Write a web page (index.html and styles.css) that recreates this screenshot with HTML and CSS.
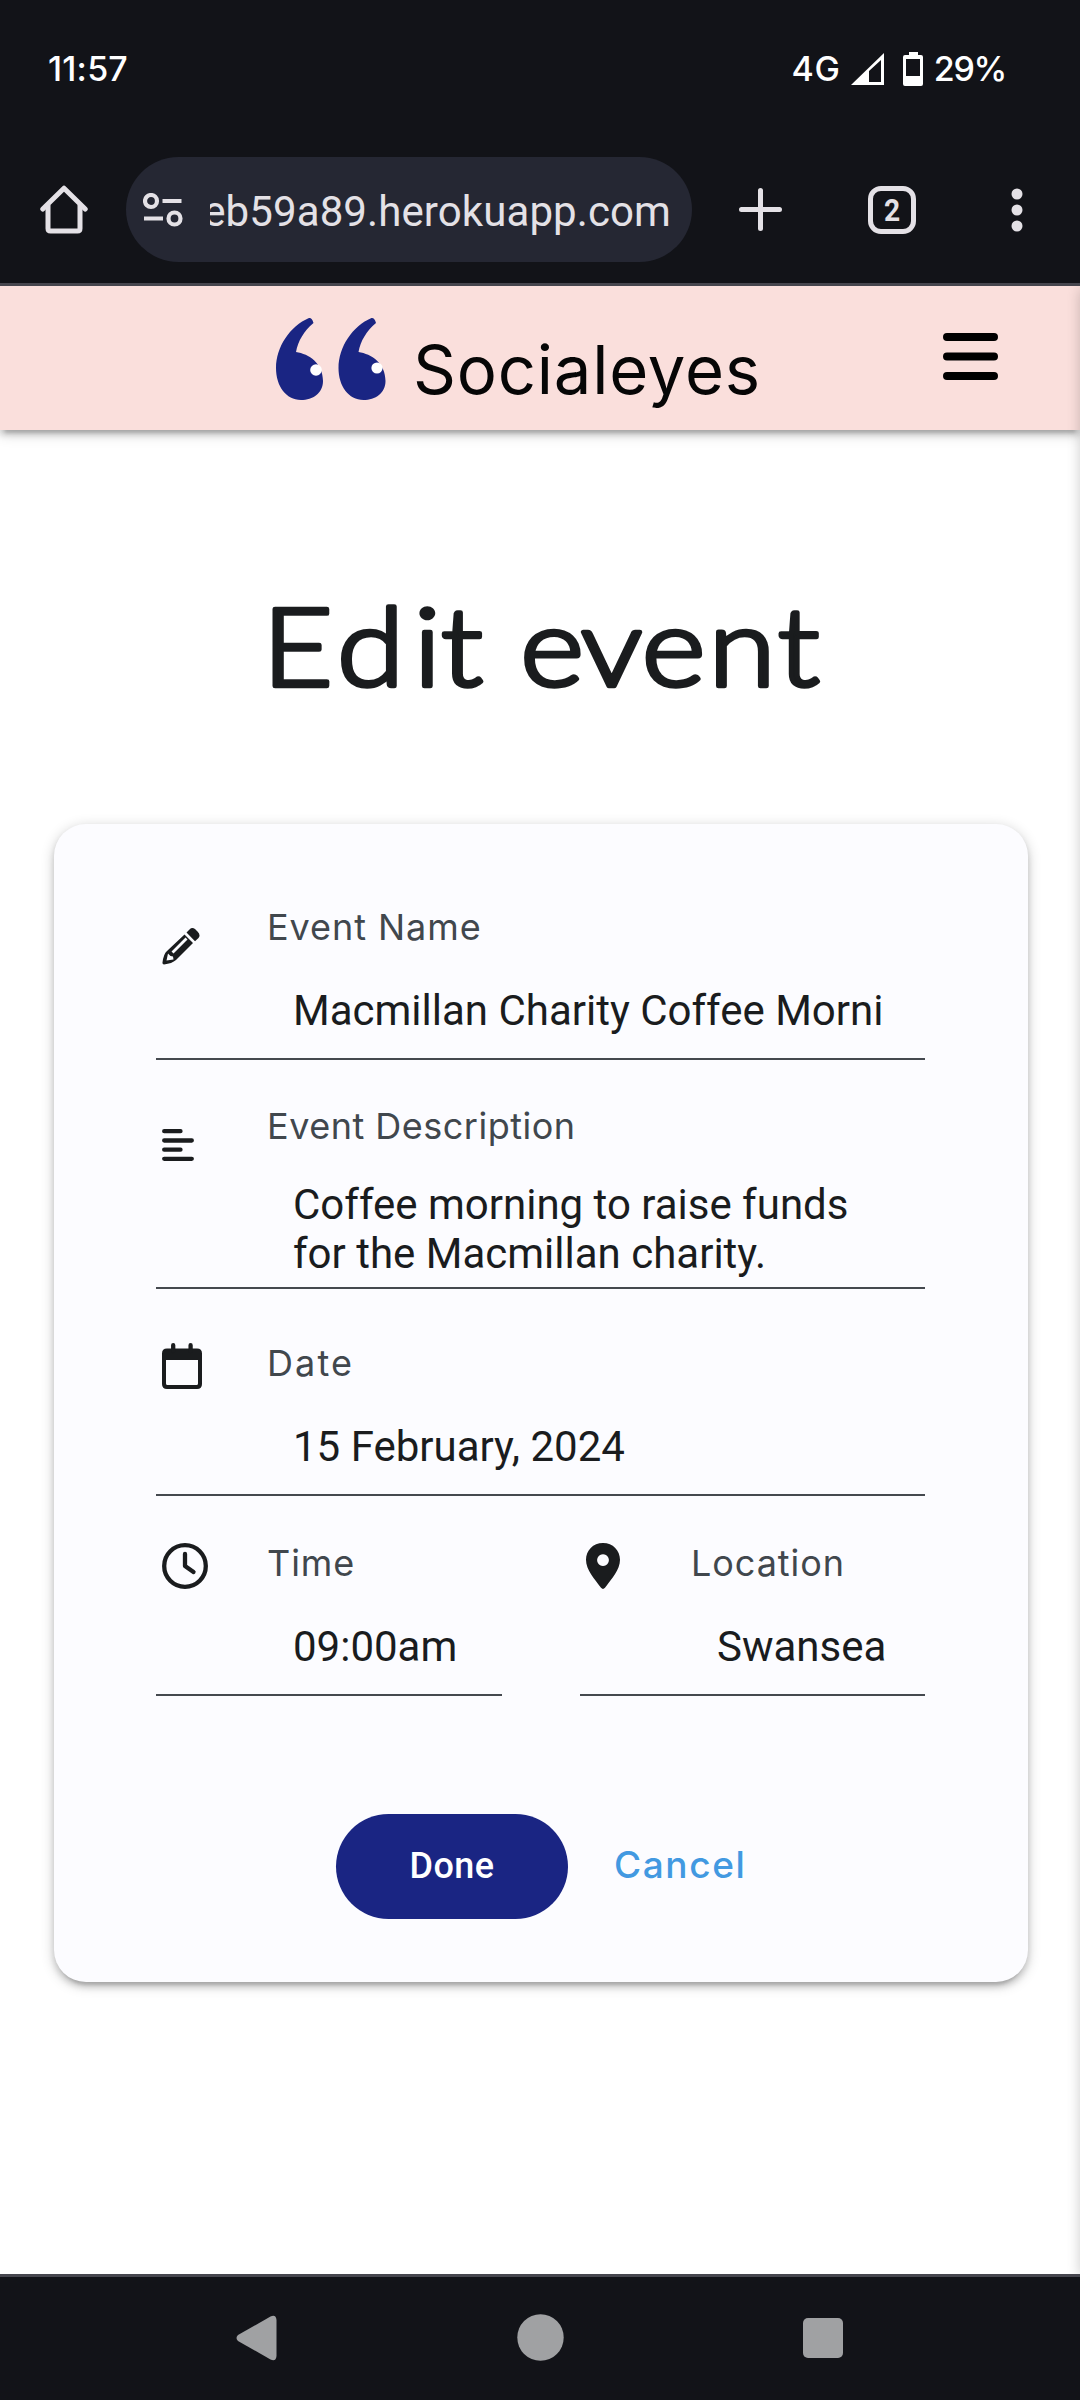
FILE: index.html
```html
<!DOCTYPE html>
<html lang="en">
<head>
<meta charset="utf-8">
<title>Socialeyes</title>
<link rel="stylesheet" href="styles.css">
</head>
<body>
<div class="status">
  <span class="status-time">11:57</span>
  <span class="status-net">4G</span>
  <svg class="status-signal" viewBox="0 0 33 32" width="33" height="32"><path fill="#fff" fill-rule="evenodd" d="M0 32 33 0V32ZM18 18V29H30V7Z"/></svg>
  <svg class="status-battery" viewBox="0 0 20 34" width="20" height="34"><path fill="#fff" fill-rule="evenodd" d="M6 0h9v3h3q2 0 2 2v27q0 2-2 2H2q-2 0-2-2V5q0-2 2-2h4ZM3 7v17h14V7Z"/></svg>
  <span class="status-level">29%</span>
</div>
<div class="toolbar">
  <svg class="home" viewBox="0 0 48 49" width="48" height="49" fill="none" stroke="#e4e1e6" stroke-width="5" stroke-linejoin="round"><path stroke-linecap="round" d="M2.8 24 24 3.2 45.2 24"/><path d="M8 20V43.5q0 2.5 2.5 2.5h27q2.5 0 2.5-2.5V20"/></svg>
  <div class="address">
    <svg class="tune" viewBox="0 0 40 34" width="40" height="34" fill="none" stroke="#e4e1e6" stroke-width="4.2"><circle cx="8" cy="8" r="6"/><circle cx="31.5" cy="25.500" r="6"/><path d="M19.500 8H38.500M1 25.500H20"/></svg>
    <div class="url">eb59a89.herokuapp.com</div>
  </div>
  <svg class="plus" viewBox="0 0 43 43" width="43" height="43" stroke="#e4e1e6" stroke-width="5" stroke-linecap="round"><path d="M21.500 2.500V40.500M2.500 21.500H40.500"/></svg>
  <div class="tabs"><span class="tab-count">2</span></div>
  <svg class="dots" viewBox="0 0 12 44" width="12" height="44" fill="#e4e1e6"><circle cx="6" cy="6" r="5.500"/><circle cx="6" cy="22" r="5.500"/><circle cx="6" cy="38" r="5.500"/></svg>
</div>
<div class="page">
  <header class="header">
    <svg class="logo" viewBox="0 0 112 84" width="112" height="84">
      <g fill="#1a2583">
        <path d="M33 1Q36 .500 37.500 6C28 14 22 24 20 35C33 37 47 46 47 64C47 76 37 83 25 83C10 83 0 69 0 51C0 30 14 9 33 1Z"/>
        <path d="M95.500 1Q98.500 .500 100 6C90.500 14 84.500 24 82.500 35C95.500 37 109.500 46 109.500 64C109.500 76 99.500 83 87.500 83C72.500 83 62.500 69 62.500 51C62.500 30 76.500 9 95.500 1Z"/>
      </g>
      <circle cx="40" cy="53" r="5.800" fill="#fff"/><circle cx="101" cy="51" r="5.600" fill="#fff"/>
    </svg>
    <span class="brand">Socialeyes</span>
    <svg class="menu" viewBox="0 0 55 47" width="55" height="47" stroke="#000" stroke-width="8" stroke-linecap="round"><path d="M4 4H51M4 23.500H51M4 43H51"/></svg>
  </header>
  <main class="main">
    <h1 class="title">
      <svg class="title-art" viewBox="0 0 1080 160" width="1080" height="160"><text transform="scale(1.12 1)" y="116.500" x="265.700 331 381.500 412.500 446 493 546 601.500 662.500 713">Edit event</text></svg>
    </h1>
    <form class="card">
      <div class="field">
        <svg class="icon pencil" viewBox="0 0 38 38" width="38" height="38"><path fill="#1a1c1e" fill-rule="evenodd" d="M22.500 7.500 31 16 14 33Q10 36.500 2 37.500Q.2 37.500 .5 35.500Q1.500 27 5 24ZM23.500 10.500 9.500 24.500l2 2L25.500 12.500ZM6 26.500 4.500 33.500 11.500 32.500 11 29.500 8.500 29ZM24.500 5.500 27.500 2.500Q30 0 33 2L35.500 4.500Q39 8 36.500 11L33 14.300Z"/></svg>
        <label class="label">Event Name</label>
        <div class="value">Macmillan Charity Coffee Morni</div>
      </div>
      <div class="field field-text">
        <svg class="icon align" viewBox="0 0 32 32" width="32" height="32" stroke="#1a1c1e" stroke-width="4.300" stroke-linecap="round"><path d="M2.200 2.200H18.500M2.200 11.500H29.800M2.200 20.700H18.500M2.200 29.800H29.800"/></svg>
        <label class="label label-desc">Event Description</label>
        <div class="value">Coffee morning to raise funds<br>for the Macmillan charity.</div>
      </div>
      <div class="field field-date">
        <svg class="icon calendar" viewBox="0 0 40 46" width="40" height="46"><path fill="#1a1c1e" fill-rule="evenodd" d="M5 5.500H35Q40 5.500 40 10.500V41Q40 46 35 46H5Q0 46 0 41V10.500Q0 5.500 5 5.500ZM4 17V40.500Q4 42 5.500 42H34.500Q36 42 36 40.500V17Z"/><path stroke="#1a1c1e" stroke-width="4.300" stroke-linecap="round" d="M11.200 2.200V8M28.600 2.200V8"/></svg>
        <label class="label label-date">Date</label>
        <div class="value">15 February, 2024</div>
      </div>
      <div class="pair">
        <div class="field">
          <svg class="icon clock" viewBox="0 0 46 46" width="46" height="46" fill="none" stroke="#1a1c1e" stroke-width="4.300" stroke-linecap="round" stroke-linejoin="round"><circle cx="23" cy="23" r="20.800"/><path d="M23 11V23L31.500 29"/></svg>
          <label class="label">Time</label>
          <div class="value">09:00am</div>
        </div>
        <div class="field">
          <svg class="icon pin" viewBox="0 0 34 46" width="34" height="46"><path fill="#1a1c1e" fill-rule="evenodd" d="M17 0C27 0 34 7.500 34 16.800C34 27 25.500 36 19 44.800Q17 47 15 44.800C8.500 36 0 27 0 16.800C0 7.500 7 0 17 0ZM17 11.200a5.900 5.900 0 1 0 .01 0Z"/></svg>
          <label class="label">Location</label>
          <div class="value">Swansea</div>
        </div>
      </div>
      <div class="actions">
        <button class="done" type="button">Done</button>
        <a class="cancel">Cancel</a>
      </div>
    </form>
  </main>
</div>
<nav class="nav">
  <svg viewBox="0 0 42 46" width="42" height="46" fill="#a0a1a3"><path d="M2 20 34.500 1.500Q40 -1 40.500 5V41Q40 47 34.500 44.500L2 26Q-1 23 2 20Z"/></svg>
  <svg viewBox="0 0 47 47" width="47" height="47" fill="#a0a1a3"><circle cx="23.500" cy="23.500" r="23.200"/></svg>
  <svg viewBox="0 0 40 40" width="40" height="40" fill="#a0a1a3"><rect width="40" height="40" rx="5"/></svg>
</nav>
</body>
</html>
```

FILE: styles.css
```css
* { box-sizing: border-box; }
body {
  margin: 0;
  width: 1080px;
  height: 2400px;
  display: flex;
  flex-direction: column;
  overflow: hidden;
  background: #fff;
  font-family: Roboto, sans-serif;
}
svg { display: block; flex: none; }

.status {
  height: 137px;
  padding: 0 74px 0 48px;
  display: flex;
  align-items: center;
  background: #121318;
  color: #fff;
  font: 500 34px Inter, sans-serif;
}
.status-time { letter-spacing: .2px; margin-right: auto; }
.status-net { letter-spacing: .8px; margin-right: 10px; }
.status-signal { margin-right: 19px; }
.status-battery { margin-right: 11px; }
.status-level { letter-spacing: -1.3px; }

.toolbar {
  height: 149px;
  padding: 20px 57px 21px 40px;
  display: flex;
  align-items: center;
  background: #121318;
  border-bottom: 3px solid #46464e;
}
.address {
  width: 566px;
  height: 105px;
  margin-left: 38px;
  padding: 0 21px 0 17px;
  display: flex;
  align-items: center;
  border-radius: 53px;
  background: #252733;
}
.url {
  width: 461px;
  margin-left: auto;
  padding-top: 4px;
  display: flex;
  justify-content: flex-end;
  overflow: hidden;
  white-space: nowrap;
  color: #e4e1e6;
  font-size: 42px;
  letter-spacing: .1px;
}
.plus { margin-left: 47px; }
.tabs {
  width: 48px;
  height: 48px;
  margin-left: 86px;
  border: 5px solid #e4e1e6;
  border-radius: 13px;
  color: #e4e1e6;
  font: 700 32px/39px Roboto, sans-serif;
  text-align: center;
}
.tab-count { display: inline-block; transform: scaleX(.88); }
.dots { margin-left: auto; }

.page {
  position: relative;
  height: 1988px;
  display: flex;
  flex-direction: column;
  overflow: hidden;
}
/* shadow cast by the closed drawer at the right edge */
.page::after {
  content: "";
  position: absolute;
  top: 0;
  bottom: 0;
  left: 1080px;
  width: 40px;
  box-shadow: 0 3px 14px rgba(0, 0, 0, .2);
}
.header {
  height: 144px;
  flex: none;
  display: flex;
  padding-left: 276px;
  background: #fadfdc;
  box-shadow: 0 5px 6px rgba(0, 0, 0, .14), 0 8px 3px -5px rgba(0, 0, 0, .12), 0 3px 14px rgba(0, 0, 0, .2);
}
.logo { margin-top: 31px; }
.brand {
  margin-left: 25px;
  color: #060606;
  font: 400 67px/168px Inter, sans-serif;
  letter-spacing: .8px;
}
.menu { margin: 47px 82px 0 auto; }

.main { padding-top: 140px; }
.title { margin: 0; }
.title-art text {
  font: 300 109px Lato, sans-serif;
  fill: #1a1c1e;
  stroke: #1a1c1e;
  stroke-width: 4.5px;
  stroke-linejoin: round;
  text-anchor: middle;
}
.card {
  width: 974px;
  height: 1158px;
  margin: 94px 0 0 54px;
  padding: 76px 103px 0 102px;
  border-radius: 32px;
  background: #fcfcff;
  box-shadow: 0 5px 6px rgba(0, 0, 0, .14), 0 8px 3px -5px rgba(0, 0, 0, .12), 0 3px 14px rgba(0, 0, 0, .2);
}
.field {
  height: 160px;
  display: grid;
  grid-template-columns: 112px 1fr;
  grid-template-rows: 54px 1fr;
  row-gap: 32px;
  border-bottom: 2px solid #45494f;
}
.field-text { height: 190px; margin-top: 39px; row-gap: 27px; }
.field-date { margin-top: 47px; }
.pair {
  margin-top: 40px;
  display: grid;
  grid-template-columns: 346px 345px;
  justify-content: space-between;
}
.icon { margin: 7px 0 0 6px; }
.pencil { margin-top: 27px; }
.align { margin-top: 30px; }
.label {
  margin-left: -1px;
  color: #41474d;
  font: 400 36px/54px Inter, sans-serif;
  letter-spacing: .95px;
  white-space: nowrap;
}
.label-desc { letter-spacing: .5px; }
.label-date { letter-spacing: 2.1px; }
.value {
  grid-column: 2;
  padding-left: 25px;
  color: #1a1c1e;
  font-size: 42px;
  line-height: 50px;
  white-space: nowrap;
}
.field-text .value { line-height: 49px; }
.actions {
  margin-top: 118px;
  padding-left: 180px;
  display: flex;
  align-items: center;
}
.done {
  width: 232px;
  height: 105px;
  padding: 0 0 2px;
  border: 0;
  border-radius: 53px;
  background: #1a2583;
  color: #fff;
  font: 500 36px Roboto, sans-serif;
  letter-spacing: .5px;
}
.cancel {
  margin-left: 46px;
  padding-bottom: 5px;
  color: #4299e1;
  font: 500 37px Inter, sans-serif;
  letter-spacing: 1.6px;
}
.nav {
  height: 126px;
  padding: 0 237px 2px 236px;
  display: flex;
  align-items: center;
  justify-content: space-between;
  background: #121318;
  border-top: 3px solid #46464e;
}
```
